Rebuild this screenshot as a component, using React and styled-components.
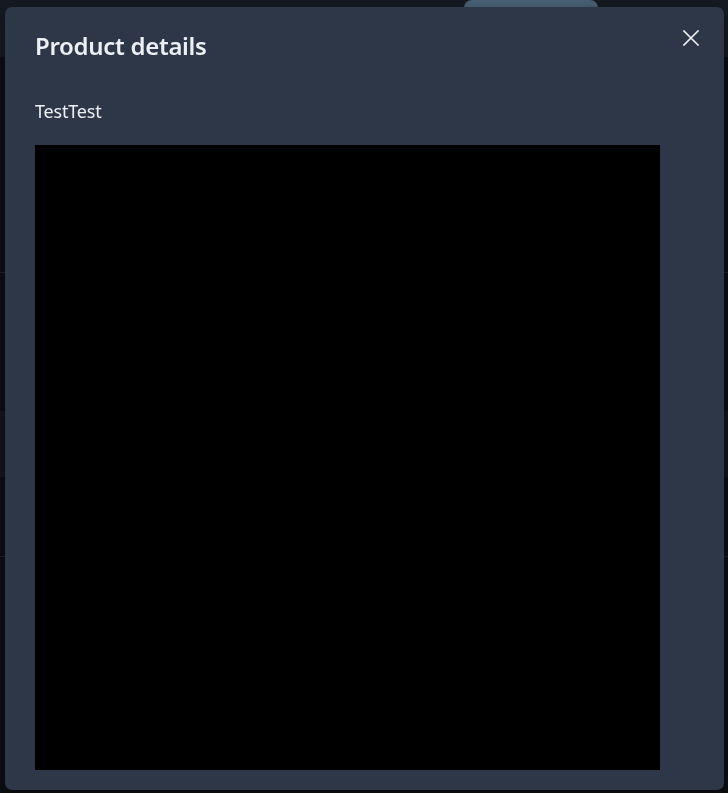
import React from 'react';
import styled, { createGlobalStyle } from 'styled-components';

const GlobalStyle = createGlobalStyle`
	html, body {
		margin: 0;
		padding: 0;
		background: #0c0e12;
		font-family: 'Noto Sans', 'Open Sans', sans-serif;
		overflow: hidden;
	}
`;

const Page = styled.div`
	min-height: 100vh;
	display: flex;
	flex-direction: column;
	background: #0c0e12;
`;

const Header = styled.header`
	height: 57px;
	display: flex;
	align-items: flex-start;
	padding-left: 464px;
	background: #161a22;
`;

const HeaderButton = styled.div`
	width: 134px;
	height: 40px;
	border-radius: 8px;
	background: #4a6378;
`;

const Row = styled.div`
	height: ${(p) => p.$h}px;
	background: ${(p) => (p.$light ? '#12151b' : '#0c0e12')};
	border-bottom: ${(p) => (p.$line ? '1px solid #1f232a' : 'none')};
	box-sizing: border-box;
`;

const Overlay = styled.div`
	position: fixed;
	inset: 0;
	display: flex;
	padding: 7px 4px 3px 5px;
	box-sizing: border-box;
`;

const Modal = styled.section`
	flex: 1;
	display: flex;
	flex-direction: column;
	background: #2d3748;
	border-radius: 7px;
	padding: 0 30px 20px;
	box-shadow: 0 4px 16px rgba(0, 0, 0, 0.4);
	position: relative;
`;

const Title = styled.h2`
	margin: 0;
	padding-top: 21px;
	font-size: 24px;
	line-height: 36px;
	font-weight: 600;
	color: #edf0f4;
	letter-spacing: -0.3px;
`;

const CloseButton = styled.button`
	position: absolute;
	top: 16px;
	right: 18px;
	width: 30px;
	height: 30px;
	display: flex;
	align-items: center;
	justify-content: center;
	border: none;
	background: transparent;
	padding: 0;
	color: #edf0f4;
	cursor: pointer;
`;

const Name = styled.p`
	margin: 0;
	padding-top: 34px;
	font-size: 18px;
	line-height: 26px;
	color: #edf0f4;
	letter-spacing: -0.2px;
`;

const Preview = styled.div`
	margin-top: 21px;
	width: 625px;
	height: 625px;
	background: #000;
`;

const App = () => {
	return (
		<>
			<GlobalStyle />
			<Page>
				<Header>
					<HeaderButton />
				</Header>
				<Row $h={216} $line />
				<Row $h={138} />
				<Row $h={66} $light />
				<Row $h={80} $line />
				<Row $h={236} />
			</Page>

			<Overlay>
				<Modal>
					<Title>Product details</Title>
					<CloseButton aria-label="Close">
						<svg width="16" height="16" viewBox="0 0 16 16">
							<path
								d="M1 1 L15 15 M15 1 L1 15"
								stroke="currentColor"
								strokeWidth="1.6"
								strokeLinecap="square"
							/>
						</svg>
					</CloseButton>
					<Name>TestTest</Name>
					<Preview />
				</Modal>
			</Overlay>
		</>
	);
};

export default App;
